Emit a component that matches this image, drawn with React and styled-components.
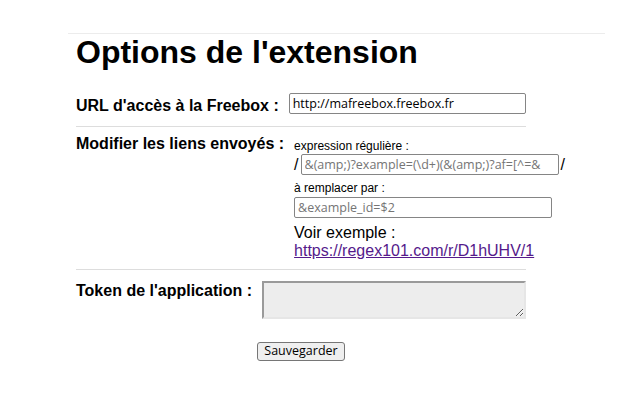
import React from "react";
import styled, { createGlobalStyle } from "styled-components";

const Global = createGlobalStyle`
  html, body { margin: 0; padding: 0; background: #fff; }
  body { font-family: "Liberation Sans", Arial, sans-serif; color: #000; }
`;

const TopRule = styled.div`
  margin: 33px 36px 0 68px;
  height: 1px;
  background: #ececec;
`;

const Page = styled.main`
  margin-left: 76px;
  width: 450px;
`;

const Title = styled.h1`
  margin: 0 0 14px;
  font-size: 32px;
  line-height: 37px;
  font-weight: bold;
`;

const Row = styled.section`
  display: flex;
  align-items: flex-start;
  gap: 10px;
  padding: ${(p) => p.$pt}px 0 ${(p) => p.$pb}px;
  border-bottom: ${(p) => (p.$divider ? "1px solid #dddddd" : "none")};
`;

const Label = styled.label`
  font-size: 16px;
  font-weight: bold;
  line-height: normal;
  margin-top: ${(p) => p.$offset}px;
  white-space: nowrap;
`;

const TextInput = styled.input`
  box-sizing: border-box;
  width: ${(p) => p.$width}px;
  height: 21px;
  margin: 0;
  padding: 0 3px;
  border: 1px solid #858585;
  border-radius: 2px;
  font-family: "Open Sans", "Noto Sans", sans-serif;
  font-size: 12.5px;
  color: #000;
  background: #fff;
  &::placeholder { color: #757575; opacity: 1; }
`;

const Field = styled.div`
  display: flex;
  flex-direction: column;
  padding-top: 4px;
`;

const Caption = styled.div`
  font-size: 12px;
  line-height: 14px;
  margin-top: ${(p) => p.$mt || 0}px;
`;

const InputLine = styled.div`
  display: flex;
  align-items: center;
  margin-top: ${(p) => p.$mt || 0}px;
`;

const Slash = styled.span`
  font-size: 16px;
  line-height: 21px;
  margin: ${(p) => (p.$before ? "0 2px 0 0" : "0 0 0 2px")};
`;

const Example = styled.div`
  margin-top: 6px;
  font-size: 16px;
  line-height: normal;
`;

const ExampleLink = styled.a`
  display: block;
  color: #551a8b;
  text-decoration: underline;
`;

const TokenArea = styled.textarea`
  box-sizing: border-box;
  width: 264px;
  height: 38px;
  margin: 0;
  padding: 2px;
  border-style: solid;
  border-width: 2px;
  border-color: #9a9a9a #e6e6e6 #e6e6e6 #9a9a9a;
  background: #ededed;
  font-family: "Liberation Mono", monospace;
  font-size: 13px;
`;

const Actions = styled.div`
  display: flex;
  justify-content: center;
  padding-top: 23px;
`;

const SaveButton = styled.button`
  box-sizing: border-box;
  height: 19px;
  padding: 0 6px;
  border: 1px solid #767676;
  border-radius: 3px;
  background: #efefef;
  font-family: "Open Sans", "Noto Sans", sans-serif;
  font-size: 12.5px;
  line-height: 16px;
  color: #000;
`;

export default function App() {
  return (
    <>
      <Global />
      <TopRule />
      <Page>
        <Title>Options de l'extension</Title>

        <Row $pt={8} $pb={11} $divider>
          <Label $offset={3.5}>URL d'accès à la Freebox :</Label>
          <TextInput $width={237} defaultValue="http://mafreebox.freebox.fr" />
        </Row>

        <Row $pt={8} $pb={9} $divider>
          <Label $offset={0}>Modifier les liens envoyés :</Label>
          <Field>
            <Caption>expression régulière :</Caption>
            <InputLine $mt={1}>
              <Slash $before>/</Slash>
              <TextInput
                $width={258}
                placeholder="&(amp;)?example=(\d+)(&(amp;)?af=[^=&"
              />
              <Slash>/</Slash>
            </InputLine>
            <Caption $mt={6}>à remplacer par :</Caption>
            <InputLine $mt={2}>
              <TextInput $width={258} placeholder="&example_id=$2" />
            </InputLine>
            <Example>
              Voir exemple :
              <ExampleLink href="#">https://regex101.com/r/D1hUHV/1</ExampleLink>
            </Example>
          </Field>
        </Row>

        <Row $pt={11} $pb={0}>
          <Label $offset={1.5}>Token de l'application :</Label>
          <TokenArea readOnly />
        </Row>

        <Actions>
          <SaveButton>Sauvegarder</SaveButton>
        </Actions>
      </Page>
    </>
  );
}
